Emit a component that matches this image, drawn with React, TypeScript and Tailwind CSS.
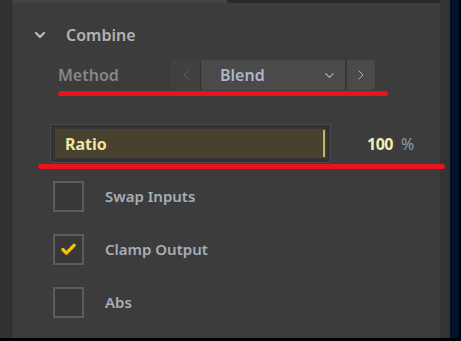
import { ChevronDown, ChevronLeft, ChevronRight, Check } from 'lucide-react'

const CHECKS = [
  { label: 'Swap Inputs', checked: false },
  { label: 'Clamp Output', checked: true },
  { label: 'Abs', checked: false },
]

export default function App() {
  return (
    <div
      className="w-[461px] h-[341px] bg-black flex flex-col overflow-hidden"
      style={{ fontFamily: '"Noto Sans", "Open Sans", sans-serif' }}
    >
      <div className="flex flex-1 min-h-0">
        {/* Left gutter */}
        <div className="w-[12px] bg-[#323232] border-r border-[#2c2c2c]" />

        {/* Main panel */}
        <div className="w-[428px] bg-[#3c3c3c] flex flex-col relative z-10">
          <div className="h-[3px] flex">
            <div className="w-[215px] bg-[#444]" />
            <div className="flex-1 bg-[#2a2a2a]" />
          </div>

          {/* Section header */}
          <div className="flex items-center h-[32px] mt-[16px] pl-[20px]">
            <ChevronDown className="w-[16px] h-[16px] text-[#b8b8b8]" strokeWidth={3.5} />
            <span className="ml-[18px] text-[16px] font-semibold text-[#b2b2b2]">Combine</span>
          </div>

          {/* Method */}
          <div className="flex items-center h-[30px] mt-[9px] pl-[46px]">
            <span className="w-[113px] text-[16px] font-semibold text-[#878787]">Method</span>
            <div className="flex h-[30px]">
              <div className="w-[29px] bg-[#414141] rounded-l-[3px] flex items-center justify-center">
                <ChevronLeft className="w-[16px] h-[16px] text-[#5f5f5f]" strokeWidth={1.5} />
              </div>
              <div className="w-[146px] bg-[#4a4a4a] flex items-center pl-[19px] pr-[8px] border-x border-[#333]">
                <span className="flex-1 text-[16px] font-semibold text-[#a9b7c6]">Blend</span>
                <ChevronDown className="w-[15px] h-[15px] text-[#b0b0b0]" strokeWidth={2} />
              </div>
              <div className="w-[28px] ml-[1px] bg-[#4a4a4a] rounded-r-[3px] flex items-center justify-center">
                <ChevronRight className="w-[16px] h-[16px] text-[#b0b0b0]" strokeWidth={1.5} />
              </div>
            </div>
          </div>
          <div className="ml-[46px] w-[330px] h-[5px] mt-[1px] bg-[#e8141c] rounded-full" />

          {/* Ratio slider */}
          <div className="flex items-center mt-[28px] pl-[38px]">
            <div className="w-[281px] h-[39px] border border-[#4a4a4a] bg-[#333] p-[4px] flex">
              <div className="flex-1 bg-[#47412f] flex items-center pl-[10px]">
                <span className="flex-1 text-[16px] font-bold text-[#f2e4a0]">Ratio</span>
                <div className="w-[2px] h-[27px] bg-[#c9af6a] mr-[1px]" />
              </div>
            </div>
            <span className="ml-[36px] text-[16px] font-bold text-[#f4ecb8] tracking-[-0.5px]">100</span>
            <span className="ml-[8px] text-[16px] text-[#8d9cab]">%</span>
          </div>
          <div className="relative ml-[26px] w-[407px] h-[5px] mt-[1px] bg-[#e8141c] rounded-full" />

          {/* Checkboxes */}
          <div className="flex flex-col gap-[22px] mt-[12px] pl-[41px]">
            {CHECKS.map(({ label, checked }) => (
              <div key={label} className="flex items-center h-[31px]">
                <div className="w-[31px] h-[31px] border-2 border-[#5c5c5c] bg-[#383838] flex items-center justify-center">
                  {checked && <Check className="w-[17px] h-[17px] text-[#f5c400]" strokeWidth={4.5} />}
                </div>
                <span className="ml-[21px] text-[15px] font-semibold text-[#a6aeb6]">{label}</span>
              </div>
            ))}
          </div>
        </div>

        {/* Right gutter */}
        <div className="w-[10px] bg-[#333]" />
        <div className="w-[9px] bg-[#05102c]" />
        <div className="w-[2px] bg-black" />
      </div>
      <div className="h-[3px] bg-black" />
    </div>
  )
}
